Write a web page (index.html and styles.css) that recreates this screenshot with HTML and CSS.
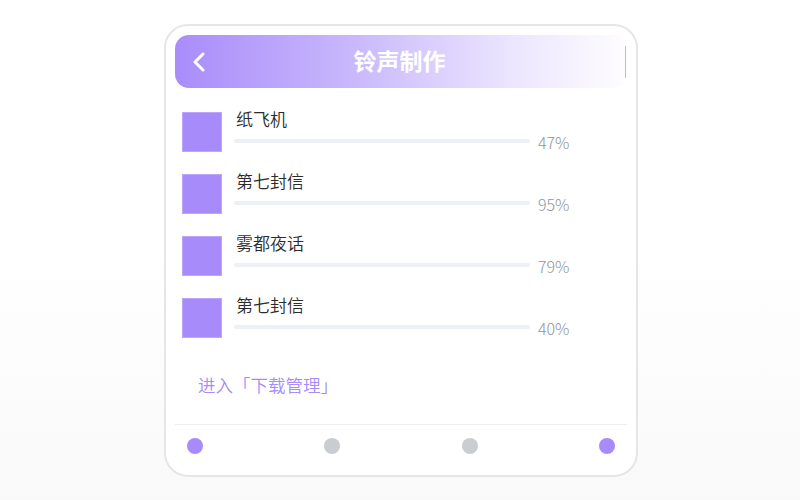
FILE: index.html
```html
<!DOCTYPE html>
<html lang="zh-CN">
<head>
    <meta charset="UTF-8">
    <meta name="viewport" content="width=device-width, initial-scale=1.0">
    <title>铃声制作</title>
    <link rel="stylesheet" href="styles.css">
</head>
<body>
    <div class="phone">
        <div class="header">
            <span class="back">
                <svg width="14" height="20" viewBox="0 0 14 20"><path d="M11 2 L3 10 L11 18" fill="none" stroke="#fff" stroke-width="3" stroke-linecap="round" stroke-linejoin="round"/></svg>
            </span>
            <h1>铃声制作</h1>
            <span class="edge"></span>
        </div>

        <div class="list">
            <div class="row">
                <div class="cover"></div>
                <div class="info">
                    <div class="name">纸飞机</div>
                    <div class="progress">
                        <div class="bar"></div>
                        <span class="pct">47%</span>
                    </div>
                </div>
            </div>
            <div class="row">
                <div class="cover"></div>
                <div class="info">
                    <div class="name">第七封信</div>
                    <div class="progress">
                        <div class="bar"></div>
                        <span class="pct">95%</span>
                    </div>
                </div>
            </div>
            <div class="row">
                <div class="cover"></div>
                <div class="info">
                    <div class="name">雾都夜话</div>
                    <div class="progress">
                        <div class="bar"></div>
                        <span class="pct">79%</span>
                    </div>
                </div>
            </div>
            <div class="row">
                <div class="cover"></div>
                <div class="info">
                    <div class="name">第七封信</div>
                    <div class="progress">
                        <div class="bar"></div>
                        <span class="pct">40%</span>
                    </div>
                </div>
            </div>
        </div>

        <a class="link" href="#">进入「下载管理」</a>

        <div class="tabs">
            <span class="dot on"></span>
            <span class="dot"></span>
            <span class="dot"></span>
            <span class="dot on"></span>
        </div>
    </div>
</body>
</html>
```

FILE: styles.css
```css
body {
    margin: 0;
    height: 500px;
    background: linear-gradient(to bottom, #ffffff 50%, #f9f9fa 100%);
    font-family: "Noto Sans CJK SC", "Noto Sans", sans-serif;
}
.phone {
    box-sizing: border-box;
    width: 474px;
    height: 453px;
    margin: 24px 0 0 164px;
    padding: 9px;
    background: #fff;
    border: 2px solid #e6e6ea;
    border-radius: 24px;
    display: flex;
    flex-direction: column;
}
.header {
    height: 53px;
    border-radius: 14px;
    background: linear-gradient(to right, #a98cfa 0%, #c9b9fc 40%, #ece6fe 75%, #fefdff 100%);
    display: flex;
    align-items: center;
    padding: 0 1px 0 17px;
}
.back {
    width: 14px;
    height: 20px;
    display: flex;
}
.header h1 {
    flex: 1;
    margin: 0 0 3px;
    text-align: center;
    color: #fff;
    font-size: 23px;
    font-weight: bold;
    padding-right: 32px;
}
.edge {
    width: 1px;
    height: 32px;
    background: #c3b1fb;
}
.list {
    margin-top: 24px;
    display: flex;
    flex-direction: column;
    gap: 22px;
}
.row {
    display: flex;
    padding-left: 7px;
    height: 40px;
}
.cover {
    box-sizing: border-box;
    width: 40px;
    height: 40px;
    background: #a88bfa;
    border: 1px solid #bba6fc;
}
.info {
    margin-left: 12px;
}
.name {
    padding-left: 2px;
    margin-top: -3px;
    margin-bottom: 2px;
    font-size: 17px;
    font-weight: 350;
    line-height: 19px;
    color: #2b2b2b;
}
.progress {
    display: flex;
    align-items: center;
    height: 22px;
}
.bar {
    width: 296px;
    height: 4px;
    border-radius: 2px;
    background: #edf0f4;
}
.pct {
    margin-left: 8px;
    font-size: 16px;
    font-weight: 300;
    line-height: 22px;
    color: #8e949c;
    position: relative;
    top: 1px;
}
.link {
    margin: 35px 0 0 23px;
    font-size: 17.5px;
    font-weight: 350;
    line-height: 24px;
    color: #a78bfa;
    text-decoration: none;
}
.tabs {
    margin-top: 27px;
    border-top: 1px solid #eceef1;
    padding: 13px 12px 0;
    display: flex;
    justify-content: space-between;
}
.dot {
    width: 16px;
    height: 16px;
    border-radius: 50%;
    background: #c9cdd2;
}
.dot.on {
    background: #a78bfa;
}
```
